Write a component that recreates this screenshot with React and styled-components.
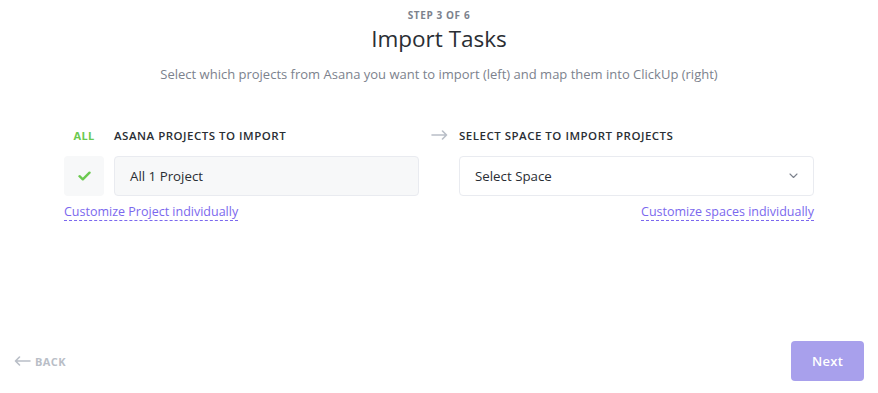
import React from "react";
import styled, { createGlobalStyle } from "styled-components";

const Global = createGlobalStyle`
  html, body { margin: 0; padding: 0; background: #fff; }
  body { font-family: "Open Sans", "Noto Sans", sans-serif; -webkit-font-smoothing: antialiased; }
  * { box-sizing: border-box; }
`;

const Page = styled.div`
  width: 878px;
  height: 393px;
  display: flex;
  flex-direction: column;
  background: #fff;
`;

const Header = styled.header`
  display: flex;
  flex-direction: column;
  align-items: center;
  padding-top: 8px;
`;

const Step = styled.div`
  font-size: 10px;
  font-weight: 700;
  letter-spacing: 0.6px;
  color: #7c828d;
  line-height: 14px;
`;

const Title = styled.h1`
  margin: 2px 0 0;
  font-size: 22.5px;
  font-weight: 500;
  color: #2a2e34;
  line-height: 30px;
`;

const Subtitle = styled.p`
  margin: 11px 0 0;
  font-size: 13px;
  color: #7c828d;
  line-height: 18px;
`;

const Content = styled.section`
  margin: 42px auto 0;
  width: 750px;
  display: grid;
  grid-template-columns: 355px 40px 355px;
  grid-template-rows: auto auto auto;
`;

const LabelRow = styled.div`
  display: flex;
  align-items: center;
  height: 20px;
`;

const AllLabel = styled.div`
  width: 40px;
  text-align: center;
  font-size: 11px;
  font-weight: 700;
  color: #6bc950;
  letter-spacing: 0.3px;
`;

const ColumnLabel = styled.div`
  font-size: 11.5px;
  font-weight: 600;
  color: #2a2e34;
  letter-spacing: 0.5px;
  margin-left: ${(p) => p.$offset || 0}px;
`;

const ArrowCell = styled.div`
  display: flex;
  align-items: center;
  justify-content: center;
  height: 20px;
`;

const FieldRow = styled.div`
  display: flex;
  gap: 10px;
  margin-top: 11px;
`;

const CheckBox = styled.div`
  width: 40px;
  height: 40px;
  border-radius: 4px;
  background: #f7f8f9;
  display: flex;
  align-items: center;
  justify-content: center;
  flex: none;
`;

const Field = styled.div`
  flex: 1;
  height: 40px;
  border: 1px solid #e9ebf0;
  border-radius: 4px;
  background: ${(p) => (p.$filled ? "#f7f8f9" : "#fff")};
  display: flex;
  align-items: center;
  justify-content: space-between;
  padding: 0 15px;
  font-size: 13.3px;
  color: #2a2e34;
`;

const LinkRow = styled.div`
  display: flex;
  justify-content: ${(p) => (p.$right ? "flex-end" : "flex-start")};
  margin-top: 8px;
`;

const Link = styled.a`
  font-size: 12.5px;
  color: #7b68ee;
  border-bottom: 1px dashed #7b68ee;
  line-height: 16px;
  cursor: pointer;
`;

const Spacer = styled.div`
  flex: 1;
`;

const Footer = styled.footer`
  display: flex;
  justify-content: space-between;
  align-items: center;
  padding: 0 14px 12px;
`;

const Back = styled.div`
  display: flex;
  align-items: center;
  gap: 4px;
  font-size: 11px;
  font-weight: 700;
  letter-spacing: 0.4px;
  color: #b9bec7;
`;

const NextButton = styled.button`
  width: 73px;
  height: 40px;
  border: none;
  border-radius: 4px;
  background: #a8a0ec;
  color: #fff;
  font-family: inherit;
  font-size: 13px;
  font-weight: 600;
  letter-spacing: 0.3px;
`;

const Check = () => (
  <svg width="13" height="10" viewBox="0 0 13 10">
    <path d="M1.5 5.2 L4.8 8.3 L11.5 1.7" fill="none" stroke="#6bc950" strokeWidth="2.4" strokeLinecap="round" strokeLinejoin="round" />
  </svg>
);

const Arrow = ({ color = "#b9bec7", left }) => (
  <svg width="17" height="10" viewBox="0 0 17 10">
    {left ? (
      <path d="M16 5 H1.5 M5.5 1 L1.5 5 L5.5 9" fill="none" stroke={color} strokeWidth="1.6" strokeLinecap="round" strokeLinejoin="round" />
    ) : (
      <path d="M1 5 H15.5 M11.5 1 L15.5 5 L11.5 9" fill="none" stroke={color} strokeWidth="1.6" strokeLinecap="round" strokeLinejoin="round" />
    )}
  </svg>
);

const Chevron = () => (
  <svg width="9" height="6" viewBox="0 0 9 6">
    <path d="M1 1 L4.5 4.5 L8 1" fill="none" stroke="#7c828d" strokeWidth="1.1" strokeLinecap="round" strokeLinejoin="round" />
  </svg>
);

export default function App() {
  return (
    <>
      <Global />
      <Page>
        <Header>
          <Step>STEP 3 OF 6</Step>
          <Title>Import Tasks</Title>
          <Subtitle>
            Select which projects from Asana you want to import (left) and map them into ClickUp (right)
          </Subtitle>
        </Header>
        <Content>
          <LabelRow>
            <AllLabel>ALL</AllLabel>
            <ColumnLabel $offset={10}>ASANA PROJECTS TO IMPORT</ColumnLabel>
          </LabelRow>
          <ArrowCell>
            <Arrow />
          </ArrowCell>
          <LabelRow>
            <ColumnLabel>SELECT SPACE TO IMPORT PROJECTS</ColumnLabel>
          </LabelRow>

          <FieldRow>
            <CheckBox>
              <Check />
            </CheckBox>
            <Field $filled>All 1 Project</Field>
          </FieldRow>
          <div />
          <FieldRow>
            <Field>
              Select Space
              <Chevron />
            </Field>
          </FieldRow>

          <LinkRow>
            <Link>Customize Project individually</Link>
          </LinkRow>
          <div />
          <LinkRow $right>
            <Link>Customize spaces individually</Link>
          </LinkRow>
        </Content>
        <Spacer />
        <Footer>
          <Back>
            <Arrow left />
            BACK
          </Back>
          <NextButton>Next</NextButton>
        </Footer>
      </Page>
    </>
  );
}
